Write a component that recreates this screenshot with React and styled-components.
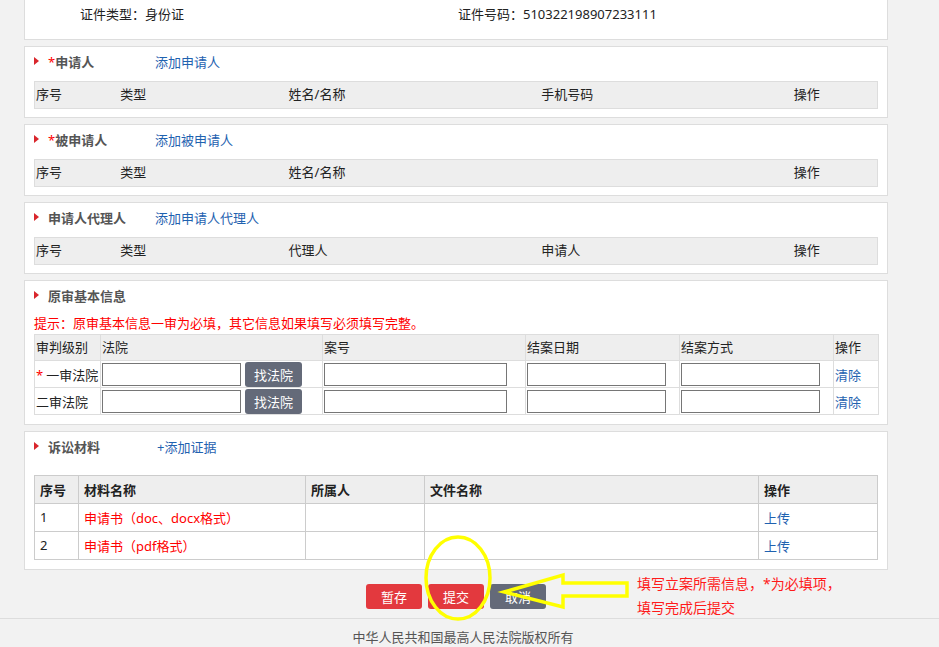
import React from 'react';
import styled, { createGlobalStyle } from 'styled-components';

const GlobalStyle = createGlobalStyle`
  html, body {
    margin: 0;
    padding: 0;
    background: #f2f2f2;
  }
  body {
    font-family: "Noto Sans", "Noto Sans CJK SC", sans-serif;
    font-size: 13px;
    color: #333;
  }
`;

const Page = styled.div`
  position: relative;
  width: 939px;
  height: 647px;
  overflow: hidden;
  background: #f2f2f2;
`;

const Main = styled.div`
  width: 864px;
  margin-left: 24px;
  display: flex;
  flex-direction: column;
  gap: 6px;
`;

const Card = styled.section`
  background: #fff;
  border: 1px solid #ddd;
  padding: 0 9px ${p => p.$pb || 8}px;
  box-sizing: border-box;
`;

const TopCard = styled(Card)`
  border-top: none;
  height: 40px;
  padding: 0 0 0 55px;
  display: grid;
  grid-template-columns: 378px 1fr;
  align-items: start;
  line-height: 28px;
  color: #222;
`;

const TitleRow = styled.div`
  box-sizing: border-box;
  height: 30px;
  padding-bottom: 2px;
  display: flex;
  align-items: center;
  margin-bottom: ${p => p.$mb || 0}px;
`;

const Marker = styled.span`
  width: 0;
  height: 0;
  border-top: 4px solid transparent;
  border-bottom: 4px solid transparent;
  border-left: 5px solid #d9262c;
  margin-right: 9px;
`;

const Title = styled.span`
  width: ${p => p.$w || 107}px;
  font-weight: bold;
  color: #555;
`;

const Star = styled.span`
  color: #f00;
  font-weight: normal;
`;

const Link = styled.a`
  color: #1f62b0;
  text-decoration: none;
  cursor: pointer;
`;

const HeadGrid = styled.div`
  box-sizing: border-box;
  display: grid;
  grid-template-columns: 10% 20% 30% 30% 10%;
  height: 28px;
  padding-bottom: 3px;
  align-items: center;
  background: #eee;
  border: 1px solid #ddd;
  color: #222;
  & > span {
    padding-left: 1px;
  }
`;

const Hint = styled.div`
  color: #f00;
  padding-top: 2px;
  padding-bottom: 1px;
  line-height: 20px;
  white-space: nowrap;
`;

const Table = styled.table`
  width: ${p => p.$w}px;
  border-collapse: collapse;
  table-layout: fixed;
  color: #222;
  & td, & th {
    border: 1px solid ${p => p.$line};
    padding: 0;
    text-align: left;
    white-space: nowrap;
    overflow: hidden;
  }
`;

const CourtHead = styled.tr`
  height: 26px;
  background: #eee;
  & th {
    font-weight: normal;
    padding: 0 0 2px 1px;
  }
`;

const CourtRow = styled.tr`
  height: 26px;
  & td {
    padding: 1px 0 0 1px;
  }
`;

const Req = styled.span`
  color: #f00;
  margin-right: 3px;
`;

const FieldWrap = styled.div`
  display: flex;
  align-items: center;
  gap: 4px;
`;

const Input = styled.input`
  box-sizing: border-box;
  width: ${p => p.$w}px;
  height: 23px;
  border: 1px solid #767676;
  margin: 0;
  padding: 0 3px;
  font: inherit;
`;

const GrayBtn = styled.button`
  width: 57px;
  height: 25px;
  border: none;
  border-radius: 3px;
  background: #646a79;
  color: #fff;
  font: inherit;
  padding: 0 0 1px;
  cursor: pointer;
`;

const MatHead = styled.tr`
  height: 28px;
  background: #eee;
  & th {
    font-weight: bold;
    padding: 0 0 1px 5px;
  }
`;

const MatRow = styled.tr`
  height: 28px;
  & td {
    padding: 0 0 1px 5px;
  }
`;

const RedText = styled.span`
  color: #f00;
`;

const Actions = styled.div`
  display: flex;
  justify-content: center;
  gap: 6px;
  margin-top: 14px;
  width: 864px;
  margin-left: 24px;
`;

const ActionBtn = styled.button`
  width: 56px;
  height: 25px;
  border: none;
  border-radius: 3px;
  background: ${p => (p.$gray ? '#646a79' : '#e3393e')};
  color: #fff;
  font: inherit;
  padding: 0 0 1px;
  cursor: pointer;
`;

const Footer = styled.footer`
  margin-top: 9px;
  border-top: 1px solid #ddd;
  background: #f2f2f2;
  text-align: center;
  padding: 8px 13px 0 0;
  line-height: 20px;
  color: #555;
`;

const Overlay = styled.svg`
  position: absolute;
  left: 0;
  top: 0;
  pointer-events: none;
`;

const Note = styled.div`
  position: absolute;
  left: 637px;
  top: 572px;
  line-height: 24px;
  font-size: 14px;
  color: #ff1a1a;
`;

const partyCols = {
  申请人: ['序号', '类型', '姓名/名称', '手机号码', '操作'],
  被申请人: ['序号', '类型', '姓名/名称', '', '操作'],
  代理人: ['序号', '类型', '代理人', '申请人', '操作'],
};

const PartyCard = ({ required, title, link, cols }) => (
  <Card>
    <TitleRow $mb={4}>
      <Marker />
      <Title>
        {required && <Star>*</Star>}
        {title}
      </Title>
      <Link>{link}</Link>
    </TitleRow>
    <HeadGrid>
      {cols.map((c, i) => (
        <span key={i}>{c}</span>
      ))}
    </HeadGrid>
  </Card>
);

const courts = [
  { label: '一审法院', required: true },
  { label: '二审法院', required: false },
];

const materials = [
  { no: 1, name: '申请书（doc、docx格式）' },
  { no: 2, name: '申请书（pdf格式）' },
];

export default function App() {
  return (
    <Page>
      <GlobalStyle />
      <Main>
        <TopCard>
          <span>证件类型：身份证</span>
          <span>证件号码：510322198907233111</span>
        </TopCard>

        <PartyCard required title="申请人" link="添加申请人" cols={partyCols.申请人} />
        <PartyCard required title="被申请人" link="添加被申请人" cols={partyCols.被申请人} />
        <PartyCard title="申请人代理人" link="添加申请人代理人" cols={partyCols.代理人} />

        <Card $pb={9}>
          <TitleRow>
            <Marker />
            <Title $w={200}>原审基本信息</Title>
          </TitleRow>
          <Hint>提示：原审基本信息一审为必填，其它信息如果填写必须填写完整。</Hint>
          <Table $w={844} $line="#ddd">
            <colgroup>
              <col style={{ width: 66 }} />
              <col style={{ width: 222 }} />
              <col style={{ width: 203 }} />
              <col style={{ width: 154 }} />
              <col style={{ width: 154 }} />
              <col style={{ width: 45 }} />
            </colgroup>
            <thead>
              <CourtHead>
                <th>审判级别</th>
                <th>法院</th>
                <th>案号</th>
                <th>结案日期</th>
                <th>结案方式</th>
                <th>操作</th>
              </CourtHead>
            </thead>
            <tbody>
              {courts.map(c => (
                <CourtRow key={c.label}>
                  <td>
                    {c.required && <Req>*</Req>}
                    {c.label}
                  </td>
                  <td>
                    <FieldWrap>
                      <Input $w={139} />
                      <GrayBtn>找法院</GrayBtn>
                    </FieldWrap>
                  </td>
                  <td>
                    <Input $w={183} />
                  </td>
                  <td>
                    <Input $w={139} />
                  </td>
                  <td>
                    <Input $w={139} />
                  </td>
                  <td>
                    <Link>清除</Link>
                  </td>
                </CourtRow>
              ))}
            </tbody>
          </Table>
        </Card>

        <Card $pb={9}>
          <TitleRow $mb={13}>
            <Marker />
            <Title $w={109}>诉讼材料</Title>
            <Link>+添加证据</Link>
          </TitleRow>
          <Table $w={843} $line="#ccc">
            <colgroup>
              <col style={{ width: 44 }} />
              <col style={{ width: 227 }} />
              <col style={{ width: 119 }} />
              <col style={{ width: 334 }} />
              <col style={{ width: 119 }} />
            </colgroup>
            <thead>
              <MatHead>
                <th>序号</th>
                <th>材料名称</th>
                <th>所属人</th>
                <th>文件名称</th>
                <th>操作</th>
              </MatHead>
            </thead>
            <tbody>
              {materials.map(m => (
                <MatRow key={m.no}>
                  <td>{m.no}</td>
                  <td>
                    <RedText>{m.name}</RedText>
                  </td>
                  <td />
                  <td />
                  <td>
                    <Link>上传</Link>
                  </td>
                </MatRow>
              ))}
            </tbody>
          </Table>
        </Card>
      </Main>

      <Actions>
        <ActionBtn>暂存</ActionBtn>
        <ActionBtn>提交</ActionBtn>
        <ActionBtn $gray>取消</ActionBtn>
      </Actions>

      <Footer>中华人民共和国最高人民法院版权所有</Footer>

      <Overlay width="939" height="647">
        <ellipse cx="458" cy="578" rx="32" ry="41" fill="none" stroke="#ffff00" strokeWidth="3.5" />
        <polygon
          points="504,592 563,575 563,583 627,583 627,596 563,596 563,607"
          fill="none"
          stroke="#ffff00"
          strokeWidth="3.5"
          strokeLinejoin="miter"
        />
      </Overlay>
      <Note>
        填写立案所需信息，*为必填项，
        <br />
        填写完成后提交
      </Note>
    </Page>
  );
}
